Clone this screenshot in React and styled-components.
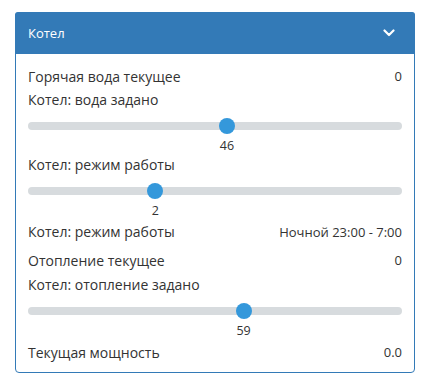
import React from "react";
import styled, { createGlobalStyle } from "styled-components";

const Global = createGlobalStyle`
  html, body { margin: 0; padding: 0; background: #fff; }
  body { font-family: "Open Sans", "Noto Sans", sans-serif; color: #333; }
`;

const Page = styled.div`
  padding: 12px 0 0 15px;
`;

const Card = styled.section`
  width: 400px;
  box-sizing: border-box;
  border: 1px solid #337ab7;
  border-radius: 4px;
  background: #fff;
`;

const Header = styled.header`
  height: 42px;
  margin: -1px -1px 0;
  padding: 0 20px 0 13px;
  background: #337ab7;
  border-radius: 3px 3px 0 0;
  color: #fff;
  font-size: 13px;
  display: flex;
  align-items: center;
  justify-content: space-between;
`;

const Body = styled.div`
  padding: 12px 12px 10px 12px;
  display: flex;
  flex-direction: column;
`;

const Row = styled.div`
  display: flex;
  align-items: center;
  justify-content: space-between;
  height: 20px;
  margin-top: ${(p) => p.$mt || 0}px;
  font-size: 14px;
`;

const Value = styled.span`
  font-size: 13px;
`;

const SliderBlock = styled.div`
  display: flex;
  flex-direction: column;
  margin-top: ${(p) => p.$mt || 0}px;
`;

const Label = styled.div`
  height: 20px;
  line-height: 20px;
  font-size: 14px;
`;

const TrackArea = styled.div`
  position: relative;
  height: 20px;
  margin-top: 6px;
  display: flex;
  align-items: center;
`;

const Track = styled.div`
  width: 100%;
  height: 8px;
  border-radius: 4px;
  background: #d7dbde;
`;

const Thumb = styled.div`
  position: absolute;
  top: 2px;
  width: 16px;
  height: 16px;
  border-radius: 50%;
  background: #3498db;
`;

const ValueLine = styled.div`
  position: relative;
  height: 16px;
  margin-top: 2px;
`;

const ValueText = styled.span`
  position: absolute;
  top: 0;
  width: 40px;
  margin-left: -12px;
  text-align: center;
  font-size: 12.5px;
  line-height: 16px;
`;

const Chevron = () => (
  <svg width="12" height="8" viewBox="0 0 12 8">
    <path d="M1.5 1.5 L6 6 L10.5 1.5" fill="none" stroke="#fff" strokeWidth="2.2" strokeLinecap="round" strokeLinejoin="round" />
  </svg>
);

const Slider = ({ label, value, min, max, mt }) => {
  const f = (value - min) / (max - min);
  const left = `calc(${f} * (100% - 16px))`;
  return (
    <SliderBlock $mt={mt}>
      <Label>{label}</Label>
      <TrackArea>
        <Track />
        <Thumb style={{ left }} />
      </TrackArea>
      <ValueLine>
        <ValueText style={{ left }}>{value}</ValueText>
      </ValueLine>
    </SliderBlock>
  );
};

export default function App() {
  return (
    <>
      <Global />
      <Page>
        <Card>
          <Header>
            <span>Котел</span>
            <Chevron />
          </Header>
          <Body>
            <Row>
              <span>Горячая вода текущее</span>
              <Value>0</Value>
            </Row>
            <Slider label="Котел: вода задано" value={46} min={30} max={60} mt={4} />
            <Slider label="Котел: режим работы" value={2} min={0} max={6} mt={1} />
            <Row $mt={2.5}>
              <span>Котел: режим работы</span>
              <Value>Ночной 23:00 - 7:00</Value>
            </Row>
            <Row $mt={8.5}>
              <span>Отопление текущее</span>
              <Value>0</Value>
            </Row>
            <Slider label="Котел: отопление задано" value={59} min={30} max={80} mt={5} />
            <Row $mt={3}>
              <span>Текущая мощность</span>
              <Value>0.0</Value>
            </Row>
          </Body>
        </Card>
      </Page>
    </>
  );
}
